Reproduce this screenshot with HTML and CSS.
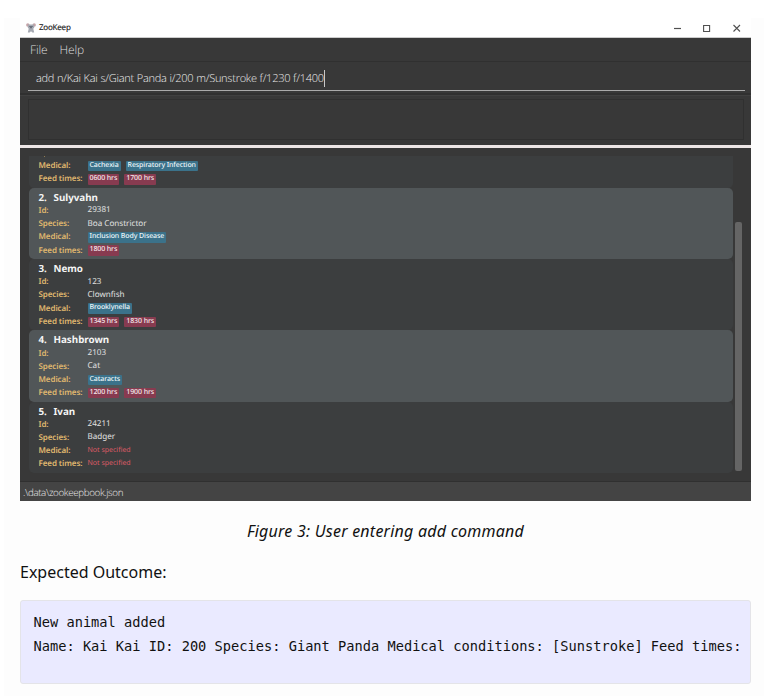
FILE: index.html
```html
<!DOCTYPE html>
<html lang="en">
<head>
<meta charset="utf-8">
<title>ZooKeep</title>
<link rel="stylesheet" href="styles.css">
</head>
<body>
<main class="sheet">
  <section class="window">
    <header class="titlebar">
      <svg class="logo" width="10" height="10" viewBox="0 0 10 10">
        <circle cx="1.8" cy="2" r="1.7" fill="#c5a5a9"/><circle cx="8.2" cy="2" r="1.7" fill="#c5a5a9"/>
        <path d="M2.2 1.6h5.6l.5 2.6-1 1.5.9 3.8H6.4L5 8.2 3.6 9.5H1.8l.9-3.8-1-1.5z" fill="#a5a9b2"/>
        <path d="M4.4 3h1.2v2.2H4.4z" fill="#444b59"/><path d="M3 3h.8v.8H3zM6.2 3H7v.8h-.8z" fill="#59606c"/>
      </svg>
      <span class="app-name">ZooKeep</span>
      <svg class="controls" width="70" height="10" viewBox="0 0 70 10" fill="none" stroke="#505050">
        <path d="M1 5.5h7" stroke-width="1.2"/><path d="M30.6 2.5h6v6h-6z" stroke-width="1.1"/><path d="M60.5 2l6.5 6.5M67 2l-6.5 6.5" stroke-width="1.1"/>
      </svg>
    </header>
    <nav class="menu"><span class="file">File</span><span class="help">Help</span></nav>
    <div class="command"><div class="input"><span class="typed">add n/Kai Kai s/Giant Panda i/200 m/Sunstroke f/1230 f/1400</span><i class="caret"></i></div></div>
    <div class="result"><div class="result-box"></div></div>
    <div class="list">
      <div class="cards">
        <article class="card cut">
          <dl>
            <dt>Medical:</dt><dd><b class="chip">Cachexia</b><b class="chip">Respiratory Infection</b></dd>
            <dt>Feed times:</dt><dd><b class="chip time">0600 hrs</b><b class="chip time">1700 hrs</b></dd>
          </dl>
        </article>
        <article class="card alt">
          <h2><span>2.</span>Sulyvahn</h2>
          <dl>
            <dt>Id:</dt><dd>29381</dd>
            <dt>Species:</dt><dd>Boa Constrictor</dd>
            <dt>Medical:</dt><dd><b class="chip">Inclusion Body Disease</b></dd>
            <dt>Feed times:</dt><dd><b class="chip time">1800 hrs</b></dd>
          </dl>
        </article>
        <article class="card">
          <h2><span>3.</span>Nemo</h2>
          <dl>
            <dt>Id:</dt><dd>123</dd>
            <dt>Species:</dt><dd>Clownfish</dd>
            <dt>Medical:</dt><dd><b class="chip">Brooklynella</b></dd>
            <dt>Feed times:</dt><dd><b class="chip time">1345 hrs</b><b class="chip time">1830 hrs</b></dd>
          </dl>
        </article>
        <article class="card alt">
          <h2><span>4.</span>Hashbrown</h2>
          <dl>
            <dt>Id:</dt><dd>2103</dd>
            <dt>Species:</dt><dd>Cat</dd>
            <dt>Medical:</dt><dd><b class="chip">Cataracts</b></dd>
            <dt>Feed times:</dt><dd><b class="chip time">1200 hrs</b><b class="chip time">1900 hrs</b></dd>
          </dl>
        </article>
        <article class="card">
          <h2><span>5.</span>Ivan</h2>
          <dl>
            <dt>Id:</dt><dd>24211</dd>
            <dt>Species:</dt><dd>Badger</dd>
            <dt>Medical:</dt><dd class="none">Not specified</dd>
            <dt>Feed times:</dt><dd class="none">Not specified</dd>
          </dl>
        </article>
      </div>
      <div class="scrollbar"></div>
    </div>
    <footer class="status"><span>.\data\zookeepbook.json</span></footer>
  </section>
  <p class="caption"><em>Figure 3: User entering add command</em></p>
  <p class="outcome"><span>Expected Outcome:</span></p>
  <pre class="output">New animal added
Name: Kai Kai ID: 200 Species: Giant Panda Medical conditions: [Sunstroke] Feed times:</pre>
</main>
</body>
</html>
```
FILE: styles.css
```css
* { box-sizing: border-box; }
body { margin: 0; height: 696px; overflow: hidden; background: #fff; font-family: "Noto Sans", "Open Sans", sans-serif; }
.sheet { margin: 18px 0 0 4px; height: 678px; padding: 0 13px 0 16px; background: #fdfdfd; }
.window { width: 731px; height: 483px; background: #383838; display: flex; flex-direction: column; text-rendering: geometricPrecision; }
.titlebar { height: 20px; background: #fff; border-bottom: 1px solid #ccc; display: flex; align-items: center; padding: 0 9px 0 6px; }
.app-name { margin-left: 3px; padding-top: 1px; font-size: 8px; letter-spacing: -.22px; line-height: 18px; color: #222; -webkit-text-stroke: .15px #222; }
.logo { flex: none; }
.controls { margin-left: auto; margin-right: -1px; }
.menu { height: 24px; padding-left: 10px; border-bottom: 1px solid #303030; display: flex; gap: 12px; font-family: "Open Sans", sans-serif; font-size: 12px; letter-spacing: -.15px; line-height: 23px; font-weight: 300; color: #dedede; }
.command { height: 33px; padding: 0 6px 0 8px; border-bottom: 2px solid #303030; }
.input { height: 29px; border-bottom: 1px solid #aaa; padding: 4px 0 0 8px; display: flex; align-items: center; font-family: "Open Sans", sans-serif; font-size: 11px; letter-spacing: -.26px; word-spacing: .3px; font-weight: 300; color: #ececec; white-space: nowrap; }
.caret { width: 1px; height: 17px; background: #c8c8c8; }
.result { height: 50px; padding: 3px 7px 6px 8px; border-top: 1px solid #404040; }
.result-box { height: 41px; border: 1px solid #303030; }
.list { flex: 1; border-top: 3px solid #eee7e7; display: flex; padding: 8px 9px 8px 9px; }
.cards { width: 705px; }
.card { height: 71.3px; padding: 3px 9.5px 0; border-radius: 5px; background: #3c3e3f; }
.card.alt { background: #515658; }
.card.cut { height: 32px; padding-top: 3.4px; border-radius: 0 0 5px 5px; background: linear-gradient(#8f7a50, #8f7a50) 14.5px 0 / 1px 1px no-repeat #3c3e3f; }
h2 { margin: 0; height: 13.2px; font-size: 9.8px; line-height: 13px; color: #f4f4f4; display: flex; }
h2 span { width: 15px; }
dl { margin: 0; display: grid; grid-template-columns: 49px 1fr; grid-auto-rows: 13.2px; line-height: 13.2px; }
dt { font-size: 8px; letter-spacing: -.08px; font-weight: 600; color: #e0b96f; white-space: nowrap; }
dd { margin: 0; display: flex; align-items: center; gap: 5px; font-size: 8.1px; line-height: 12.4px; color: #e0e0e0; }
.chip { height: 10.6px; margin-top: .8px; padding: 0 2px; border-radius: 1px; background: #3b728a; color: #eef6f9; font-size: 7px; letter-spacing: -.1px; line-height: 10.8px; font-weight: 500; white-space: nowrap; }
.chip.time { background: #873b50; color: #f6e8eb; }
.none { padding-top: 1px; color: #df5b66; font-size: 7px; }
.scrollbar { width: 7px; height: 249px; margin: 66px 0 0 2px; border-radius: 2px; background: #656565; }
.status { height: 20px; padding-left: 3px; background: #444; border-top: 1px solid #303030; font-family: "Open Sans", sans-serif; font-size: 9.8px; letter-spacing: -.37px; line-height: 21px; font-weight: 300; color: #ececec; }
.caption { margin: 18px 0 0; text-align: center; font-size: 16px; letter-spacing: .23px; line-height: 24px; color: #111; }
.outcome { margin: 17px 0 0; font-size: 16px; line-height: 24px; color: #111; }
.output { margin: 16px 0 0; height: 84px; width: 731px; padding: 9px 12.5px; border: 1px solid #e4e4e8; border-radius: 3px; background: #eaeaff; font-family: "DejaVu Sans Mono", monospace; font-size: 13.68px; line-height: 24px; color: #111; overflow: hidden; }
```
